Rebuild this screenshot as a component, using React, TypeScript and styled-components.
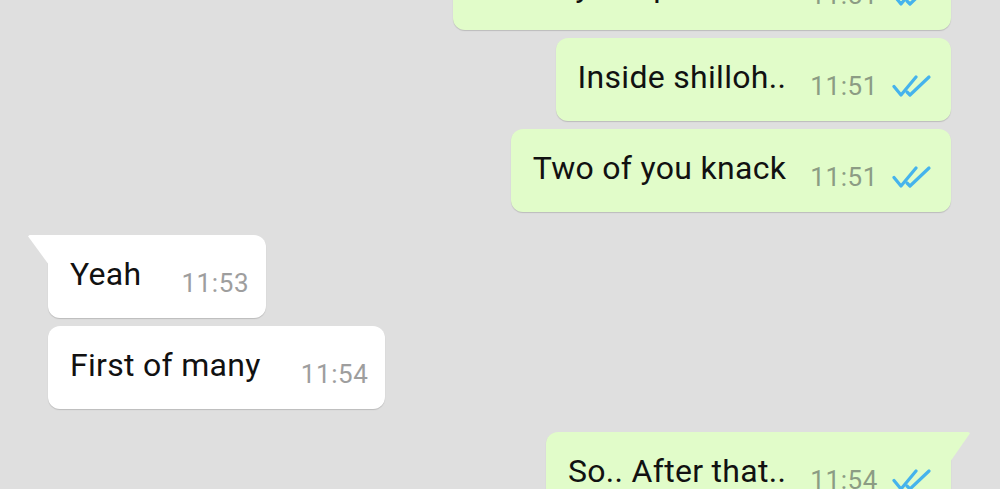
import styled, { createGlobalStyle, css } from "styled-components"

const GlobalStyle = createGlobalStyle`
  html, body {
    margin: 0;
    padding: 0;
    background: #dfdfdf;
    overflow: hidden;
  }
  body {
    height: 489px;
    font-family: Roboto, "Noto Sans", "Liberation Sans", sans-serif;
  }
`

interface Message {
  text: string
  time: string
  out: boolean
  tail: boolean
}

const messages: Message[] = [
  { text: "Where you up all time", time: "11:51", out: true, tail: false },
  { text: "Inside shilloh..", time: "11:51", out: true, tail: false },
  { text: "Two of you knack", time: "11:51", out: true, tail: false },
  { text: "Yeah", time: "11:53", out: false, tail: true },
  { text: "First of many", time: "11:54", out: false, tail: false },
  { text: "So.. After that..", time: "11:54", out: true, tail: true },
]

const Chat = styled.div`
  display: flex;
  flex-direction: column;
  padding: 0 49px 0 48px;
  margin-top: -53px;
`

const Row = styled.div<{ $out: boolean; $tail: boolean }>`
  display: flex;
  justify-content: ${(p) => (p.$out ? "flex-end" : "flex-start")};
  margin-top: ${(p) => (p.$tail ? "23px" : "8px")};
  &:first-child {
    margin-top: 0;
  }
`

const Bubble = styled.div<{ $out: boolean; $tail: boolean }>`
  position: relative;
  display: flex;
  align-items: flex-start;
  height: 83px;
  box-sizing: border-box;
  padding: 21px ${(p) => (p.$out ? "19px" : "17px")} 26px 22px;
  border-radius: 12px;
  background: ${(p) => (p.$out ? "#e1fcc9" : "#ffffff")};
  box-shadow: 0 1px 1px rgba(0, 0, 0, 0.16);

  ${(p) =>
    p.$tail &&
    (p.$out
      ? css`
          border-top-right-radius: 0;
          &::before {
            content: "";
            position: absolute;
            top: 0;
            right: -19px;
            width: 20px;
            height: 30px;
            background: #e1fcc9;
            clip-path: polygon(0 0, 92% 0, 100% 4%, 0 100%);
          }
        `
      : css`
          border-top-left-radius: 0;
          &::before {
            content: "";
            position: absolute;
            top: 0;
            left: -20px;
            width: 21px;
            height: 30px;
            background: #ffffff;
            clip-path: polygon(8% 0, 100% 0, 100% 100%, 0 4%);
          }
        `)}
`

const Text = styled.span`
  font-size: 32px;
  line-height: 36px;
  letter-spacing: 0.3px;
  color: #111;
  white-space: nowrap;
`

const Meta = styled.div<{ $out: boolean }>`
  display: flex;
  align-items: center;
  gap: 14px;
  margin-top: 12px;
  margin-left: ${(p) => (p.$out ? "24px" : "40px")};
`

const Time = styled.span<{ $out: boolean }>`
  font-size: 26px;
  line-height: 30px;
  letter-spacing: 0.6px;
  color: ${(p) => (p.$out ? "#8c9c84" : "#9e9e9e")};
`

const Ticks = () => (
  <svg width="40" height="24" viewBox="0 0 40 24" fill="none">
    <path
      d="M2 12.5 L9 21 L24 3"
      stroke="#45b3ec"
      strokeWidth="3.2"
      strokeLinecap="round"
      strokeLinejoin="round"
    />
    <path
      d="M15 18 L18 21 L37 3"
      stroke="#45b3ec"
      strokeWidth="3.2"
      strokeLinecap="round"
      strokeLinejoin="round"
    />
  </svg>
)

export default function App() {
  return (
    <>
      <GlobalStyle />
      <Chat>
        {messages.map((m, i) => (
          <Row key={i} $out={m.out} $tail={m.tail}>
            <Bubble $out={m.out} $tail={m.tail}>
              <Text>{m.text}</Text>
              <Meta $out={m.out}>
                <Time $out={m.out}>{m.time}</Time>
                {m.out && <Ticks />}
              </Meta>
            </Bubble>
          </Row>
        ))}
      </Chat>
    </>
  )
}
